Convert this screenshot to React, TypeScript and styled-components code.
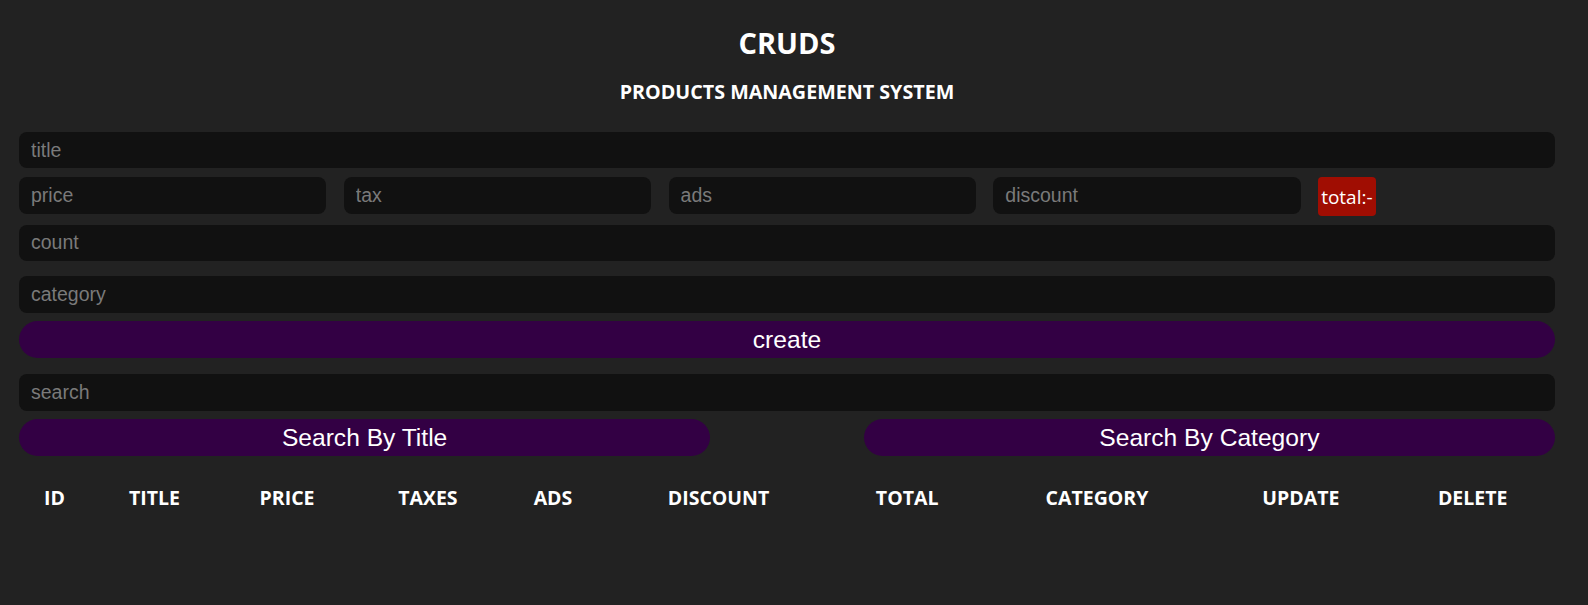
import React from 'react';
import styled, { createGlobalStyle } from 'styled-components';

const Global = createGlobalStyle`
  html, body { margin: 0; padding: 0; background: #222222; }
  body { color: #ffffff; font-family: "Open Sans", "Noto Sans", sans-serif; }
  * { box-sizing: border-box; }
`;

const Page = styled.div`
  width: 1588px;
  min-height: 605px;
  padding: 0 33px 0 19px;
  background: #222222;
`;

const Head = styled.header`
  text-align: center;
  padding-top: 23px;
`;

const Title = styled.h1`
  margin: 0;
  font-size: 29px;
  line-height: 40px;
  font-weight: 700;
`;

const Subtitle = styled.h2`
  margin: 16.4px 0 0;
  font-size: 19.7px;
  line-height: 26px;
  font-weight: 700;
`;

const Form = styled.section`
  display: flex;
  flex-direction: column;
  margin-top: 26.6px;
`;

const Field = styled.input<{ $top?: number }>`
  display: block;
  width: 100%;
  height: 36.5px;
  margin-top: ${(p) => p.$top ?? 0}px;
  padding: 0 12px;
  border: none;
  outline: none;
  border-radius: 8px;
  background: #111111;
  color: #ffffff;
  font-family: "Liberation Sans", Arial, sans-serif;
  font-size: 19.5px;
  &::placeholder { color: #7a7a7a; }
`;

const PriceRow = styled.div`
  display: flex;
  align-items: flex-start;
  gap: 17.6px;
  margin-top: 8.8px;
`;

const PriceField = styled(Field)`
  width: 20%;
  flex: none;
`;

const Total = styled.small`
  display: flex;
  align-items: center;
  height: 38.7px;
  padding: 0 3px;
  border-radius: 4px;
  background: #a00d02;
  color: #ffffff;
  font-size: 19px;
`;

const Button = styled.button<{ $top?: number }>`
  display: block;
  width: 100%;
  height: 37px;
  margin-top: ${(p) => p.$top ?? 0}px;
  padding: 0;
  border: none;
  border-radius: 20px;
  background: #330044;
  color: #ffffff;
  font-family: "Liberation Sans", Arial, sans-serif;
  font-size: 24.6px;
  cursor: pointer;
`;

const SearchButtons = styled.div`
  display: flex;
  justify-content: space-between;
  margin-top: 8.5px;
`;

const HalfButton = styled(Button)`
  width: 45%;
  height: 36.7px;
`;

const Table = styled.table`
  width: 100%;
  margin-top: 21.4px;
  border-spacing: 0;
`;

const Th = styled.th`
  padding: 8px;
  font-size: 19.5px;
  line-height: 26px;
  font-weight: 700;
  text-align: center;
`;

const fields = ['price', 'tax', 'ads', 'discount'];
const heads = ['ID', 'TITLE', 'PRICE', 'TAXES', 'ADS', 'DISCOUNT', 'TOTAL', 'CATEGORY', 'UPDATE', 'DELETE'];

export default function App() {
  return (
    <Page>
      <Global />
      <Head>
        <Title>CRUDS</Title>
        <Subtitle>PRODUCTS MANAGEMENT SYSTEM</Subtitle>
      </Head>
      <Form>
        <Field placeholder="title" />
        <PriceRow>
          {fields.map((f) => (
            <PriceField key={f} placeholder={f} />
          ))}
          <Total>total:-</Total>
        </PriceRow>
        <Field $top={8.6} placeholder="count" />
        <Field $top={15.2} placeholder="category" />
        <Button $top={8.5}>create</Button>
        <Field $top={16} placeholder="search" />
        <SearchButtons>
          <HalfButton>Search By Title</HalfButton>
          <HalfButton>Search By Category</HalfButton>
        </SearchButtons>
      </Form>
      <Table>
        <thead>
          <tr>
            {heads.map((h) => (
              <Th key={h}>{h}</Th>
            ))}
          </tr>
        </thead>
        <tbody />
      </Table>
    </Page>
  );
}
